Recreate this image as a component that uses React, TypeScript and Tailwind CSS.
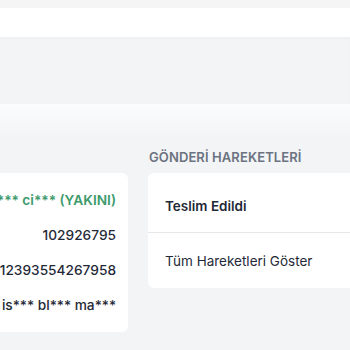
import React from 'react';

const font = { fontFamily: 'Inter, "Noto Sans", sans-serif' };

export default function App() {
  const details = [
    { text: '*** ci*** (YAKINI)', green: true },
    { text: '102926795' },
    { text: '12393554267958' },
    { text: 'is*** bl*** ma***' },
  ];

  return (
    <div className="w-[350px] h-[350px] overflow-hidden bg-[#f3f4f6]" style={font}>
      <div className="h-[8px] bg-[#f5f5f5]" />
      <div className="h-[29px] bg-white" />
      <div className="h-[67px] bg-[#f3f4f6] shadow-[inset_0_2px_2px_rgba(0,0,0,0.02)]" />
      <div className="h-[246px] bg-gradient-to-b from-[#fbfcfd] to-[#f3f4f6] to-[14%]">
        <div className="flex items-start gap-[20px] pt-[45px]">
          <div className="mt-[24px] w-[128px] shrink-0 overflow-hidden rounded-r-md bg-white pt-[10px] pb-[9px]">
            {details.map((d) => (
              <div
                key={d.text}
                className={`flex h-[35px] items-center justify-end whitespace-nowrap pr-[12px] text-[13.7px] ${
                  d.green ? 'font-semibold text-[#3c9a6b]' : 'font-medium text-[#1f2937]'
                }`}
              >
                {d.text}
              </div>
            ))}
          </div>

          <div className="min-w-[260px] flex-1">
            <h4 className="mb-[8px] pl-[1px] text-[13px] font-semibold leading-[16px] tracking-[0.1px] text-[#6b7280] whitespace-nowrap">
              GÖNDERİ HAREKETLERİ
            </h4>
            <div className="rounded-l-md bg-white">
              <div className="flex h-[60px] items-center border-b border-[#e5e7eb] pt-[8px] pl-[17px] text-[13.5px] font-semibold text-[#1f2937]">
                Teslim Edildi
              </div>
              <div className="flex h-[55px] items-center pt-[2px] pl-[17px] text-[13.5px] text-[#1f2937]">
                Tüm Hareketleri Göster
              </div>
            </div>
          </div>
        </div>
      </div>
    </div>
  );
}
